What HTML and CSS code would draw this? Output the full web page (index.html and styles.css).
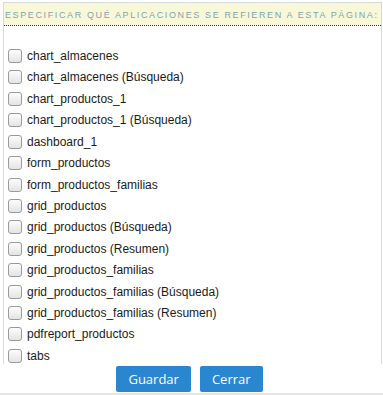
FILE: index.html
```html
<!DOCTYPE html>
<html lang="es">
<head>
  <meta charset="UTF-8">
  <title>Aplicaciones</title>
  <link rel="stylesheet" href="styles.css">
</head>
<body>
  <div class="panel">
    <div class="panel-title">Especificar qué aplicaciones se refieren a esta página:</div>
    <ul class="app-list">
      <li><label><input type="checkbox"> chart_almacenes</label></li>
      <li><label><input type="checkbox"> chart_almacenes (Búsqueda)</label></li>
      <li><label><input type="checkbox"> chart_productos_1</label></li>
      <li><label><input type="checkbox"> chart_productos_1 (Búsqueda)</label></li>
      <li><label><input type="checkbox"> dashboard_1</label></li>
      <li><label><input type="checkbox"> form_productos</label></li>
      <li><label><input type="checkbox"> form_productos_familias</label></li>
      <li><label><input type="checkbox"> grid_productos</label></li>
      <li><label><input type="checkbox"> grid_productos (Búsqueda)</label></li>
      <li><label><input type="checkbox"> grid_productos (Resumen)</label></li>
      <li><label><input type="checkbox"> grid_productos_familias</label></li>
      <li><label><input type="checkbox"> grid_productos_familias (Búsqueda)</label></li>
      <li><label><input type="checkbox"> grid_productos_familias (Resumen)</label></li>
      <li><label><input type="checkbox"> pdfreport_productos</label></li>
      <li><label><input type="checkbox"> tabs</label></li>
    </ul>
  </div>
  <div class="actions">
    <button type="button" class="btn">Guardar</button>
    <button type="button" class="btn">Cerrar</button>
  </div>
</body>
</html>
```

FILE: styles.css
```css
body {
  margin: 0;
  padding: 0;
  background: #fff;
  font-family: "Liberation Sans", Arial, sans-serif;
}
.panel {
  margin: 2px 0 0 3px;
  width: 377px;
  height: 361px;
  border: 1px solid #d3dbe0;
  border-bottom: none;
  overflow: hidden;
}
.panel-title {
  background: #f8f8d8;
  color: #7fa3ad;
  font-size: 9px;
  letter-spacing: 1.62px;
  text-transform: uppercase;
  white-space: nowrap;
  height: 22px;
  line-height: 25px;
  padding-left: 1px;
  border-bottom: 1px dotted #333;
}
.app-list {
  list-style: none;
  margin: 0;
  padding: 23px 0 0 4px;
}
.app-list li {
  height: 21.43px;
  font-size: 12px;
  color: #1a1a1a;
}
.app-list label {
  display: flex;
  align-items: center;
  gap: 5px;
}
.app-list input {
  appearance: none;
  -webkit-appearance: none;
  width: 14px;
  height: 14px;
  margin: 0;
  border: 1px solid #9a9a9a;
  border-radius: 3px;
  background: linear-gradient(#fcfcfc, #e4e4e4);
}
.actions {
  display: flex;
  justify-content: center;
  gap: 9px;
  padding: 2px 4px 0 0;
  height: 27px;
  border-bottom: 2px solid #e6e6e6;
}
.btn {
  font-family: "Open Sans", sans-serif;
  font-size: 13px;
  color: #fff;
  background: #2a86d0;
  border: none;
  border-radius: 2px;
  height: 26px;
  padding: 0 12px;
}
```
